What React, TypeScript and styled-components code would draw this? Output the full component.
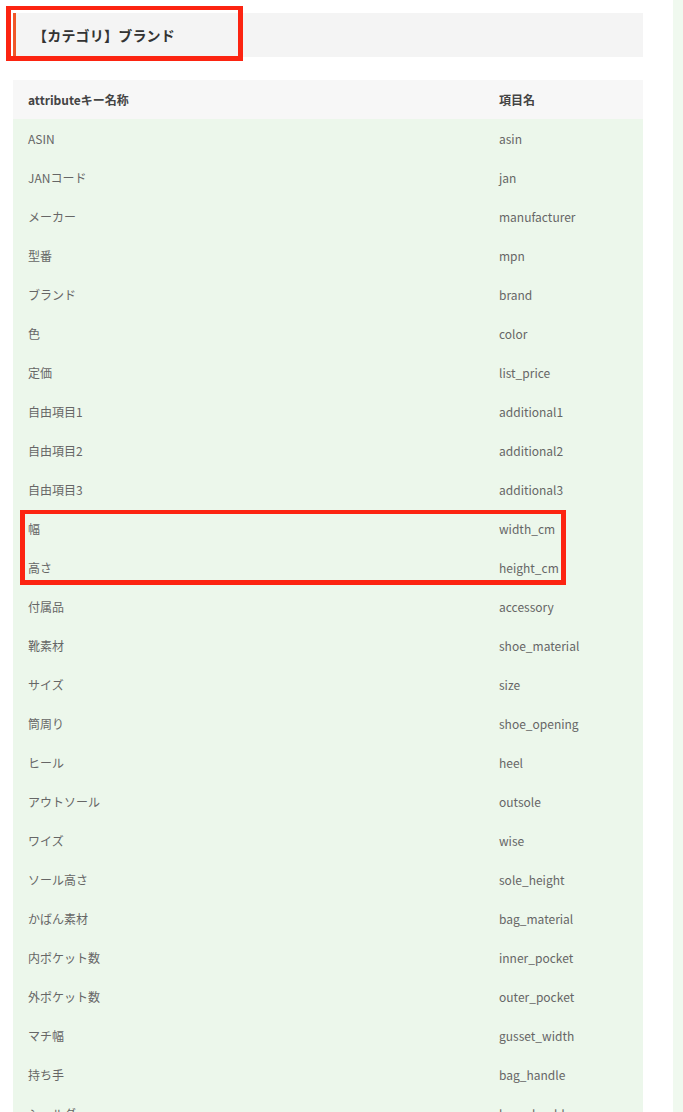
import React from "react";
import styled, { createGlobalStyle } from "styled-components";

const Global = createGlobalStyle`
  html, body { margin: 0; padding: 0; background: #fff; }
  body { font-family: "Noto Sans CJK JP", "Noto Sans", sans-serif; color: #555; }
`;

const Page = styled.div`
  display: flex;
  gap: 30px;
  padding-left: 13px;
  min-height: 1112px;
`;

const Main = styled.main`
  width: 630px;
  flex: none;
  padding-top: 13px;
`;

const Sidebar = styled.aside`
  flex: 1;
  background: #f0f9ef;
`;

const HeadingWrap = styled.div`
  position: relative;
`;

const Heading = styled.h2`
  margin: 0;
  height: 44px;
  display: flex;
  align-items: center;
  background: #f4f4f4;
  border-left: 3px solid #f0562a;
  padding-left: 17px;
  font-size: 14px;
  font-weight: 700;
  color: #333;
  letter-spacing: 0.2px;
`;

const Mark = styled.div<{ $left: number; $top: number; $w: number; $h: number; $bw: number }>`
  position: absolute;
  left: ${(p) => p.$left}px;
  top: ${(p) => p.$top}px;
  width: ${(p) => p.$w}px;
  height: ${(p) => p.$h}px;
  box-sizing: border-box;
  border: ${(p) => p.$bw}px solid #fc2411;
  border-top-width: ${(p) => p.$bw - 1}px;
  pointer-events: none;
`;

const TableWrap = styled.div`
  position: relative;
  margin-top: 23px;
`;

const Row = styled.div<{ $head?: boolean }>`
  display: grid;
  grid-template-columns: 471px 1fr;
  height: 39px;
  align-items: center;
  background: ${(p) => (p.$head ? "#f7f7f7" : "#ecf7eb")};
  font-size: 12px;
  font-weight: ${(p) => (p.$head ? 700 : 400)};
  color: ${(p) => (p.$head ? "#444" : "#666")};
`;

const Cell = styled.div`
  padding: 0 15px;
  white-space: nowrap;
`;

const rows: [string, string][] = [
  ["ASIN", "asin"],
  ["JANコード", "jan"],
  ["メーカー", "manufacturer"],
  ["型番", "mpn"],
  ["ブランド", "brand"],
  ["色", "color"],
  ["定価", "list_price"],
  ["自由項目1", "additional1"],
  ["自由項目2", "additional2"],
  ["自由項目3", "additional3"],
  ["幅", "width_cm"],
  ["高さ", "height_cm"],
  ["付属品", "accessory"],
  ["靴素材", "shoe_material"],
  ["サイズ", "size"],
  ["筒周り", "shoe_opening"],
  ["ヒール", "heel"],
  ["アウトソール", "outsole"],
  ["ワイズ", "wise"],
  ["ソール高さ", "sole_height"],
  ["かばん素材", "bag_material"],
  ["内ポケット数", "inner_pocket"],
  ["外ポケット数", "outer_pocket"],
  ["マチ幅", "gusset_width"],
  ["持ち手", "bag_handle"],
  ["ショルダー", "bag_shoulder"],
];

export default function App() {
  return (
    <>
      <Global />
      <Page>
        <Main>
          <HeadingWrap>
            <Heading>【カテゴリ】ブランド</Heading>
            <Mark $left={-7} $top={-7} $w={237} $h={55} $bw={5} />
          </HeadingWrap>
          <TableWrap>
            <Row $head>
              <Cell>attributeキー名称</Cell>
              <Cell>項目名</Cell>
            </Row>
            {rows.map(([a, b]) => (
              <Row key={b}>
                <Cell>{a}</Cell>
                <Cell>{b}</Cell>
              </Row>
            ))}
            <Mark $left={7} $top={430} $w={546} $h={75} $bw={5} />
          </TableWrap>
        </Main>
        <Sidebar />
      </Page>
    </>
  );
}
